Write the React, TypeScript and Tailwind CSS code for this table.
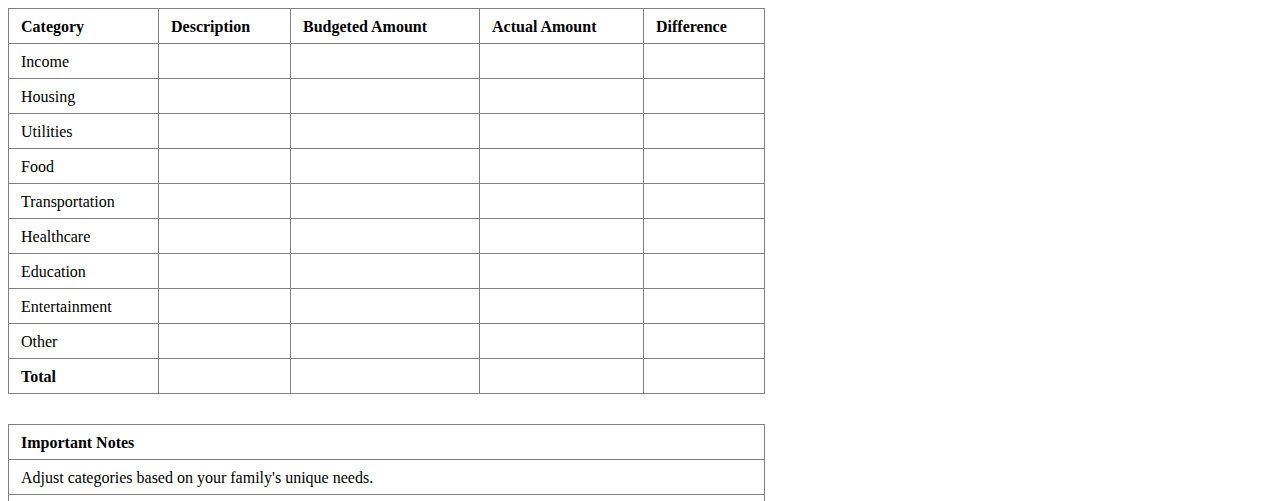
import React from "react";

const rows = ["Income","Housing","Utilities","Food","Transportation","Healthcare","Education","Entertainment","Other"];
const cell = "border border-[#808080] h-[35px] px-3 pt-[2px] pb-0 align-middle text-left";

export default function App() {
  return (
    <div className="p-2 bg-white text-black text-[16px] leading-[18px]" style={{ fontFamily: '"Liberation Serif", "Times New Roman", serif' }}>
      <table className="border-collapse table-fixed w-[756px]">
        <colgroup>
          <col className="w-[150px]" />
          <col className="w-[132px]" />
          <col className="w-[189px]" />
          <col className="w-[164px]" />
          <col className="w-[121px]" />
        </colgroup>
        <thead>
          <tr>
            {["Category","Description","Budgeted Amount","Actual Amount","Difference"].map((h) => (
              <th key={h} className={cell + " font-bold"}>{h}</th>
            ))}
          </tr>
        </thead>
        <tbody>
          {rows.map((r) => (
            <tr key={r}>
              <td className={cell}>{r}</td>
              <td className={cell}></td>
              <td className={cell}></td>
              <td className={cell}></td>
              <td className={cell}></td>
            </tr>
          ))}
          <tr>
            <td className={cell + " font-bold"}>Total</td>
            <td className={cell}></td>
            <td className={cell}></td>
            <td className={cell}></td>
            <td className={cell}></td>
          </tr>
        </tbody>
      </table>
      <table className="border-collapse w-[757px] mt-[30px]">
        <thead>
          <tr><th className={cell + " font-bold"}>Important Notes</th></tr>
        </thead>
        <tbody>
          <tr><td className={cell}>Adjust categories based on your family's unique needs.</td></tr>
          <tr><td className={cell}></td></tr>
        </tbody>
      </table>
    </div>
  );
}
